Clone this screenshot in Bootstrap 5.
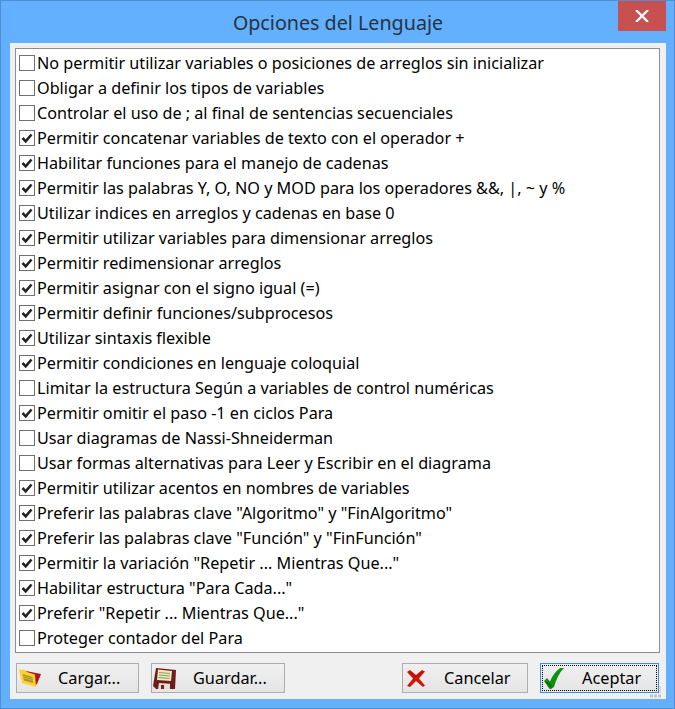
<!DOCTYPE html>
<html lang="es"><head><meta charset="utf-8"><title>Opciones del Lenguaje</title>
<link href="https://cdn.jsdelivr.net/npm/bootstrap@5.3.0/dist/css/bootstrap.min.css" rel="stylesheet">
<style>
html,body{margin:0;height:709px;overflow:hidden;background:#62b0ff}
.dlg-win{width:675px;height:709px;background:#62b0ff;border:1px solid #4d8fd0;position:relative;font-family:"Noto Sans","Open Sans",sans-serif;color:#000}
.dlg-title{height:42px;font-size:19.7px;line-height:44px;color:#27333f;text-align:center;padding-left:1px}
.dlg-close{position:absolute;top:0;right:8px;width:48px;height:30px;background:#c75050;display:flex;align-items:center;justify-content:center}
.dlg-client{margin:0 0 0 9px;width:656px;height:656px;background:#f0f0f0;padding:5px 0 0 5px}
.opt-box{height:605px;width:645px;background:#fff;border:1px solid #8c8c96;padding:1px 0 0 2px}
.opt-row{height:25px;display:flex;align-items:center;font-size:16.2px;line-height:25px;white-space:nowrap}
.opt-row span{padding-top:1px}
.opt-check{width:16px;height:16px;border:1px solid #707070;background:#fff;margin:0 2px 0 1px;flex:none;display:block}
.btn-bar{margin-top:10px;padding-left:1px;display:flex}
.dlg-btn{height:30px;border:1px solid #adadad;background:linear-gradient(#f0f0f0,#e5e5e5);display:flex;align-items:center;font-size:16.3px;padding:0;border-radius:0;color:#000;text-align:left}
.dlg-btn:hover{border-color:#adadad;color:#000}
.dlg-btn svg{flex:none;display:block}
.btn-a{width:123px;margin-right:12px}.btn-b{width:134px;margin-right:117px}.btn-c{width:126px;margin-right:12px}
.btn-d{width:119px;border-color:#3c8ee0;position:relative}
.btn-d:hover{border-color:#3c8ee0}
.btn-d::after{content:"";position:absolute;inset:1px;border:1px dotted #000}
.ico-a{margin:0 17px 0 2px}.ico-b{margin:0 16px 0 1px}.ico-c{margin:0 19px 0 4px}.ico-d{margin:0 18px 0 3px}
.grip{position:absolute;left:649px;top:685px}
</style></head><body>
<div class="dlg-win">
<div class="dlg-title">Opciones del Lenguaje</div>
<div class="dlg-close"><svg width="14" height="12" viewBox="0 0 14 12"><path d="M1 0L13 12M13 0L1 12" stroke="#fff" stroke-width="2.3" fill="none"/></svg></div>
<div class="dlg-client">
<div class="opt-box" id="opts"></div>
<div class="btn-bar">
<button type="button" class="btn dlg-btn btn-a"><svg class="ico-a" width="22" height="20" viewBox="0 0 22 20"><path d="M2 2l5 1 15 3-4 10-3 2z" fill="#b5121b"/><path d="M0 1.500l6 .5 2 2 8 2.500 1 12.500L3 15z" fill="#fdd230"/><path d="M3.500 6l10 3 .5 6L5 12.500z" fill="#a8922a"/><path d="M4 8l10 2.500M4.500 10l9.500 2.500" stroke="#e3c53a" stroke-width=".7"/></svg><span>Cargar...</span></button>
<button type="button" class="btn dlg-btn btn-b"><svg class="ico-b" width="24" height="23" viewBox="0 0 24 23"><path d="M3 1l20 2-1 19-19 0L0 19z" fill="#6d1d1e"/><path d="M5 2.500l14 1.500-1 10-14-1z" fill="#ece9bb"/><path d="M6 5.500l11 1M6 8l11 1M5.500 10.500l11 1" stroke="#8f9a6a"/><path d="M6 16l11 .8v5.200H5z" fill="#e4dcd8"/><path d="M8 18h3v4H8z" fill="#6d1d1e"/></svg><span>Guardar...</span></button>
<button type="button" class="btn dlg-btn btn-c"><svg class="ico-c" width="18" height="17" viewBox="0 0 18 17"><path d="M0 2l3-2 6 5 6-5 3 1.500-6 7 6 7-2 1.500-7-6-6 6-3-1 6-7.500z" fill="#cf1408"/><path d="M3 2l6 5 6-5" stroke="#8c0e04" stroke-width=".8" fill="none"/></svg><span>Cancelar</span></button>
<button type="button" class="btn dlg-btn btn-d"><svg class="ico-d" width="20" height="21" viewBox="0 0 20 21"><path d="M0 13l3-3 3 3.500c2-5 5-10 10-13.500l4 0c-5 5-8 12-10 19l-3 2H5.500z" fill="#0a9310"/><path d="M1 13l5 6 2 1-2-5z" fill="#05600a"/></svg><span>Aceptar</span></button>
</div>
</div>
<svg class="grip" width="12" height="12" viewBox="0 0 12 12"><path d="M0 8.500h3v3H0zM4 8.500h3v3H4zM8 8.500h3v3H8z" fill="#c4c4c4"/><path d="M9 0h2v7H9z" fill="#dcdcdc"/></svg>
</div>
<script>
const o=[[0,"No permitir utilizar variables o posiciones de arreglos sin inicializar"],[0,"Obligar a definir los tipos de variables"],[0,"Controlar el uso de ; al final de sentencias secuenciales"],[1,"Permitir concatenar variables de texto con el operador +"],[1,"Habilitar funciones para el manejo de cadenas"],[1,"Permitir las palabras Y, O, NO y MOD para los operadores &&, |, ~ y %"],[1,"Utilizar indices en arreglos y cadenas en base 0"],[1,"Permitir utilizar variables para dimensionar arreglos"],[1,"Permitir redimensionar arreglos"],[1,"Permitir asignar con el signo igual (=)"],[1,"Permitir definir funciones/subprocesos"],[1,"Utilizar sintaxis flexible"],[1,"Permitir condiciones en lenguaje coloquial"],[0,"Limitar la estructura Según a variables de control numéricas"],[1,"Permitir omitir el paso -1 en ciclos Para"],[0,"Usar diagramas de Nassi-Shneiderman"],[0,"Usar formas alternativas para Leer y Escribir en el diagrama"],[1,"Permitir utilizar acentos en nombres de variables"],[1,'Preferir las palabras clave "Algoritmo" y "FinAlgoritmo"'],[1,'Preferir las palabras clave "Función" y "FinFunción"'],[1,'Permitir la variación "Repetir ... Mientras Que..."'],[1,'Habilitar estructura "Para Cada..."'],[1,'Preferir "Repetir ... Mientras Que..."'],[0,"Proteger contador del Para"]];
const b=document.getElementById('opts');
for(const [c,t] of o){const r=document.createElement('div');r.className='opt-row';
const tick=c?'<path d="M2.500 7l3.200 3.300L11.500 3.500" stroke="#222" stroke-width="2.600" fill="none"/>':'';
r.innerHTML='<svg class="opt-check" viewBox="0 0 14 14">'+tick+'</svg><span></span>';r.lastChild.textContent=t;b.appendChild(r);}
</script>
<script src="https://cdn.jsdelivr.net/npm/bootstrap@5.3.0/dist/js/bootstrap.bundle.min.js"></script>
</body></html>
